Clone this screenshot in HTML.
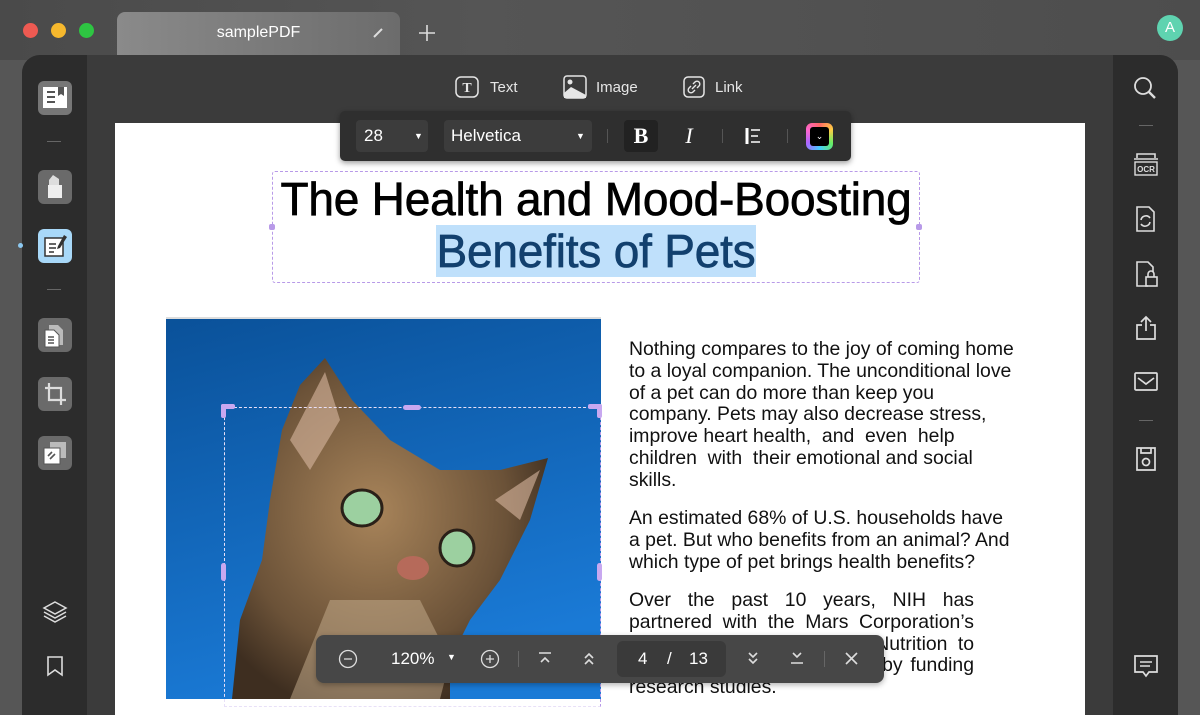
<!DOCTYPE html>
<html><head><meta charset="utf-8"><style>
*{margin:0;padding:0;box-sizing:border-box}
body{width:1200px;height:699px;overflow:hidden;background:#565656;font-family:"Liberation Sans",Arial,sans-serif;position:relative}
.abs{position:absolute}
.top{left:0;top:0;width:1200px;height:60px;background:linear-gradient(90deg,#4a4a4a,#555 40%,#4d4d4d);}
.tab{left:117px;top:12px;width:283px;height:48px;background:linear-gradient(90deg,#8a8a8a,#6c6c6c);border-radius:8px 8px 0 0;color:#fff;font-size:16px;text-align:center;line-height:42px}
.dot{width:15px;height:15px;border-radius:50%;top:23px}
.main{left:22px;top:55px;width:1156px;height:660px;background:#3b3b3b;border-radius:18px 18px 0 0;overflow:hidden}
.lsb{left:0;top:0;width:65px;height:100%;background:#2c2c2c}
.rsb{right:0;top:0;width:65px;height:100%;background:#2c2c2c}
.page{left:93px;top:68px;width:970px;height:600px;background:#fff}
.ib{width:34px;height:34px;border-radius:6px;background:#6a6a6a;left:16px}
.txt{font-size:19.4px;line-height:21.8px;color:#111;width:400px;white-space:nowrap}
.j div{text-align:justify;text-align-last:justify;white-space:normal}
.tb{color:#e6e6e6;font-size:15px}
svg{position:absolute}
</style></head><body>
<div class="abs top"></div>
<div class="abs dot" style="left:23px;background:#ee5a52"></div>
<div class="abs dot" style="left:51px;background:#f6b82d"></div>
<div class="abs dot" style="left:79px;background:#2ec542"></div>
<div class="abs tab">samplePDF</div>
<svg style="left:372px;top:27px" width="12" height="12"><path d="M2 10L10 2" stroke="#ddd" stroke-width="2"/></svg>
<svg style="left:418px;top:24px" width="18" height="18"><path d="M9 1V17M1 9H17" stroke="#ddd" stroke-width="1.6"/></svg>
<div class="abs" style="left:1157px;top:15px;width:26px;height:26px;border-radius:50%;background:#5fd3b0;color:#fff;text-align:center;line-height:26px;font-size:15px">A</div>

<div class="abs main">
 <div class="abs lsb"></div><div class="abs rsb"></div>
 <div class="abs page"></div>
</div>
<!-- left sidebar icons -->
<div class="abs ib" style="left:38px;top:81px;background:#777"></div>
<svg style="left:42px;top:86px" width="26" height="24"><rect x="1" y="1" width="24" height="21" fill="#fff"/><path d="M5 6h8M5 11h8M5 16h8" stroke="#555" stroke-width="2"/><path d="M16 1v9l3-2 3 2V1" fill="#555"/></svg>
<div class="abs" style="left:47px;top:141px;width:14px;height:1px;background:#666"></div>
<div class="abs ib" style="left:38px;top:170px"></div>
<svg style="left:44px;top:173px" width="22" height="28"><path d="M9 2l6 4v6H5V7z" fill="#ddd"/><rect x="4" y="12" width="14" height="13" fill="#eee"/></svg>
<div class="abs ib" style="left:38px;top:229px;background:#a8d8f8"></div>
<svg style="left:43px;top:233px" width="26" height="26"><rect x="2" y="5" width="18" height="18" fill="#fff" stroke="#333" stroke-width="1.5"/><path d="M6 11h7M6 15h7M6 19h5" stroke="#333" stroke-width="1.6"/><path d="M21 2l3 2-7 11-3 1 1-3z" fill="#333"/></svg>
<div class="abs" style="left:18px;top:243px;width:5px;height:5px;border-radius:50%;background:#8cc8f0"></div>
<div class="abs" style="left:47px;top:289px;width:14px;height:1px;background:#666"></div>
<div class="abs ib" style="left:38px;top:318px"></div>
<svg style="left:43px;top:323px" width="24" height="26"><path d="M6 2h9l5 5v15H6z" fill="#bbb"/><path d="M2 7h9l5 5v12H2z" fill="#fff" stroke="#555"/><path d="M5 14h6M5 17h6M5 20h6" stroke="#555" stroke-width="1.4"/></svg>
<div class="abs ib" style="left:38px;top:377px"></div>
<svg style="left:42px;top:381px" width="26" height="26"><path d="M7 2v17h17M3 7h16v17" fill="none" stroke="#ddd" stroke-width="2.2"/></svg>
<div class="abs ib" style="left:38px;top:436px"></div>
<svg style="left:42px;top:440px" width="26" height="26"><rect x="8" y="2" width="16" height="16" fill="#bbb"/><rect x="2" y="8" width="16" height="16" fill="#fff" stroke="#555"/><path d="M6 16l4-4M8 19l5-5" stroke="#555" stroke-width="1.6"/></svg>
<svg style="left:42px;top:600px" width="26" height="24"><path d="M13 2l11 6-11 6-11-6z M2 12l11 6 11-6 M2 16l11 6 11-6" fill="none" stroke="#ddd" stroke-width="1.5"/></svg>
<svg style="left:46px;top:655px" width="18" height="22"><path d="M2 2h14v18l-7-5-7 5z" fill="none" stroke="#ddd" stroke-width="1.6"/></svg>
<!-- right sidebar icons -->
<svg style="left:1133px;top:76px" width="26" height="24"><circle cx="10" cy="10" r="8" fill="none" stroke="#ddd" stroke-width="1.8"/><path d="M16 16l6 6" stroke="#ddd" stroke-width="2.4"/></svg>
<div class="abs" style="left:1139px;top:125px;width:14px;height:1px;background:#666"></div>
<svg style="left:1132px;top:152px" width="28" height="26"><path d="M5 6V2h18v4M2 7h24" stroke="#ddd" stroke-width="1.6" fill="none"/><rect x="3" y="10" width="22" height="13" fill="none" stroke="#ddd" stroke-width="1.4"/><text x="14" y="20" font-size="8" fill="#ddd" text-anchor="middle" font-family="Liberation Sans" font-weight="bold">OCR</text></svg>
<svg style="left:1134px;top:205px" width="24" height="28"><path d="M3 2h12l5 5v19H3z" fill="none" stroke="#ddd" stroke-width="1.6"/><path d="M7 15a5 5 0 0 1 9-2M16 17a5 5 0 0 1-9 2" fill="none" stroke="#ddd" stroke-width="1.6"/></svg>
<svg style="left:1134px;top:260px" width="26" height="28"><path d="M14 26H3V2h11l5 5v5" fill="none" stroke="#ddd" stroke-width="1.6"/><rect x="12" y="17" width="11" height="9" fill="none" stroke="#ddd" stroke-width="1.6"/><path d="M14 17v-3a3 3 0 0 1 6 0v3" fill="none" stroke="#ddd" stroke-width="1.6"/></svg>
<svg style="left:1134px;top:315px" width="24" height="26"><path d="M8 10H3v14h18V10h-5M12 16V2M7 7l5-5 5 5" fill="none" stroke="#ddd" stroke-width="1.7"/></svg>
<svg style="left:1133px;top:371px" width="26" height="22"><rect x="2" y="2" width="22" height="17" rx="1" fill="none" stroke="#ddd" stroke-width="1.7"/><path d="M5 7l8 6 8-6" fill="none" stroke="#ddd" stroke-width="1.7"/></svg>
<div class="abs" style="left:1139px;top:420px;width:14px;height:1px;background:#666"></div>
<svg style="left:1134px;top:446px" width="24" height="26"><path d="M3 2h18v22H3z" fill="none" stroke="#ddd" stroke-width="1.7"/><path d="M7 2v5h10V2" fill="none" stroke="#ddd" stroke-width="1.7"/><circle cx="12" cy="16" r="3.5" fill="none" stroke="#ddd" stroke-width="1.7"/></svg>
<svg style="left:1133px;top:654px" width="26" height="26"><path d="M2 2h22v16H16l-3 4-3-4H2z" fill="none" stroke="#ddd" stroke-width="1.7"/><path d="M7 8h12M7 12h10" stroke="#ddd" stroke-width="1.6"/></svg>

<!-- top toolbar -->
<svg style="left:455px;top:76px" width="24" height="22"><rect x="1" y="1" width="22" height="20" rx="5" fill="none" stroke="#e6e6e6" stroke-width="1.5"/><text x="12" y="16" font-size="14" fill="#e6e6e6" text-anchor="middle" font-family="Liberation Serif" font-weight="bold">T</text></svg>
<div class="abs tb" style="left:490px;top:79px">Text</div>
<svg style="left:563px;top:75px" width="24" height="24"><rect x="1" y="1" width="22" height="22" rx="3" fill="none" stroke="#e6e6e6" stroke-width="1.5"/><circle cx="7" cy="7" r="2.5" fill="#e6e6e6"/><path d="M1 18l7-6 15 8v3H1z" fill="#e6e6e6"/></svg>
<div class="abs tb" style="left:596px;top:79px">Image</div>
<svg style="left:683px;top:76px" width="22" height="22"><rect x="1" y="1" width="20" height="20" rx="4" fill="none" stroke="#e6e6e6" stroke-width="1.5"/><path d="M9 13l4-4M8 10l-2 2a2.5 2.5 0 0 0 4 4l2-2M14 12l2-2a2.5 2.5 0 0 0-4-4l-2 2" fill="none" stroke="#e6e6e6" stroke-width="1.4"/></svg>
<div class="abs tb" style="left:715px;top:79px">Link</div>

<!-- format bar -->
<div class="abs" style="left:340px;top:111px;width:511px;height:50px;background:#2f2f2f;border-radius:5px;box-shadow:0 2px 6px rgba(0,0,0,.4)"></div>
<div class="abs" style="left:356px;top:120px;width:72px;height:32px;background:#3c3c3c;border-radius:4px;color:#fff;font-size:17px;line-height:32px;padding-left:8px">28<span style="position:absolute;left:58px;font-size:9px">▼</span></div>
<div class="abs" style="left:444px;top:120px;width:148px;height:32px;background:#3c3c3c;border-radius:4px;color:#fff;font-size:17px;line-height:32px;padding-left:7px">Helvetica<span style="position:absolute;left:132px;font-size:9px">▼</span></div>
<div class="abs" style="left:607px;top:129px;width:1px;height:14px;background:#555"></div>
<div class="abs" style="left:624px;top:120px;width:34px;height:32px;background:#222;border-radius:4px;color:#fff;font:bold 22px 'Liberation Serif';text-align:center;line-height:32px">B</div>
<div class="abs" style="left:674px;top:120px;width:30px;height:32px;color:#fff;font:italic 22px 'Liberation Serif';text-align:center;line-height:32px">I</div>
<div class="abs" style="left:722px;top:129px;width:1px;height:14px;background:#555"></div>
<svg style="left:745px;top:127px" width="20" height="18"><path d="M2 1v16" stroke="#fff" stroke-width="3"/><path d="M6 3h9M6 9h7M6 15h9" stroke="#fff" stroke-width="1.5"/></svg>
<div class="abs" style="left:787px;top:129px;width:1px;height:14px;background:#555"></div>
<div class="abs" style="left:806px;top:123px;width:27px;height:27px;border-radius:6px;background:conic-gradient(#f66,#fc4,#6e6,#4cf,#a6f,#f6c,#f66)"></div>
<div class="abs" style="left:810px;top:127px;width:19px;height:19px;border-radius:3px;background:#000;color:#fff;font-size:9px;text-align:center;line-height:19px">⌄</div>

<!-- title -->
<div class="abs" style="left:272px;top:171px;width:648px;height:112px;border:1.5px dashed #b89ae8;border-radius:3px"></div>
<div class="abs" style="left:269px;top:224px;width:6px;height:6px;background:#b89ae8;border-radius:2px"></div>
<div class="abs" style="left:916px;top:224px;width:6px;height:6px;background:#b89ae8;border-radius:2px"></div>
<div class="abs" style="left:262px;top:173px;width:668px;text-align:center;font-size:46px;line-height:52px;color:#000;letter-spacing:-0.2px;-webkit-text-stroke:0.7px #000">The Health and Mood-Boosting<br><span style="background:#bfe0fb;color:#12406e;-webkit-text-stroke:0.7px #12406e;padding:0 1px">Benefits of Pets</span></div>

<!-- image -->
<svg style="left:166px;top:317px" width="435" height="382" viewBox="166 317 435 382">
<defs><linearGradient id="bg" x1="0" y1="0" x2="0.3" y2="1"><stop offset="0" stop-color="#0a5199"/><stop offset="1" stop-color="#1a7ad6"/></linearGradient>
<radialGradient id="fur" cx="0.45" cy="0.45" r="0.6"><stop offset="0" stop-color="#a8845a"/><stop offset="0.7" stop-color="#6b5238"/><stop offset="1" stop-color="#3e2e20"/></radialGradient></defs>
<rect x="166" y="317" width="435" height="382" fill="url(#bg)"/>
<rect x="166" y="317" width="435" height="2" fill="#ddd"/>
<path d="M325 358 L352 400 L390 440 L440 470 L500 470 L548 458 L530 520 L500 580 L470 620 L450 660 L450 699 L232 699 L240 620 L262 560 L270 500 L282 430 L300 385 Z" fill="url(#fur)"/>
<path d="M325 372 L340 420 L310 470 L290 440 Z" fill="#d9b8a0" opacity=".6"/>
<path d="M540 470 L520 520 L495 500 Z" fill="#d9b8a0" opacity=".6"/>
<path d="M330 600 L420 600 L450 660 L440 699 L290 699 Z" fill="#c8b090" opacity=".5"/>
<ellipse cx="362" cy="508" rx="20" ry="18" fill="#9cd0a0" stroke="#2a2018" stroke-width="3"/>
<ellipse cx="457" cy="548" rx="17" ry="18" fill="#9cd0a0" stroke="#2a2018" stroke-width="3"/>
<ellipse cx="413" cy="568" rx="16" ry="12" fill="#b66a5a"/>
</svg>
<div class="abs" style="left:224px;top:407px;width:377px;height:300px;border:1.5px dashed #e8e0f8;border-right-color:#b89ae8"></div>
<div class="abs" style="left:221px;top:404px;width:14px;height:5px;background:#c8a8f0;border-radius:2px"></div>
<div class="abs" style="left:221px;top:404px;width:5px;height:14px;background:#c8a8f0;border-radius:2px"></div>
<div class="abs" style="left:588px;top:404px;width:14px;height:5px;background:#c8a8f0;border-radius:2px"></div>
<div class="abs" style="left:597px;top:404px;width:5px;height:14px;background:#c8a8f0;border-radius:2px"></div>
<div class="abs" style="left:403px;top:405px;width:18px;height:5px;background:#c8a8f0;border-radius:3px"></div>
<div class="abs" style="left:221px;top:563px;width:5px;height:18px;background:#c8a8f0;border-radius:3px"></div>
<div class="abs" style="left:597px;top:563px;width:5px;height:18px;background:#c8a8f0;border-radius:3px"></div>

<!-- body text -->
<div class="abs txt" style="left:629px;top:339px">Nothing compares to the joy of coming home<br>to a loyal companion. The unconditional love<br>of a pet can do more than keep you<br>company. Pets may also decrease stress,<br>improve heart health,&nbsp; and&nbsp; even&nbsp; help<br>children&nbsp; with&nbsp; their emotional and social<br>skills.</div>
<div class="abs txt" style="left:629px;top:508px">An estimated 68% of U.S. households have<br>a pet. But who benefits from an animal? And<br>which type of pet brings health benefits?</div>
<div class="abs txt j" style="left:629px;top:590px;width:345px"><div>Over the past 10 years, NIH has</div><div>partnered with the Mars Corporation’s</div><div>WALTHAM Centre for Pet Nutrition to</div><div>answer questions like these by funding</div><div style="text-align-last:left">research studies.</div></div>

<!-- bottom toolbar -->
<div class="abs" style="left:316px;top:635px;width:568px;height:48px;background:#474747;border-radius:8px;box-shadow:0 2px 6px rgba(0,0,0,.3)"></div>
<svg style="left:338px;top:649px" width="20" height="20"><circle cx="10" cy="10" r="8.5" fill="none" stroke="#ddd" stroke-width="1.3"/><path d="M6 10h8" stroke="#ddd" stroke-width="1.3"/></svg>
<div class="abs" style="left:391px;top:649px;color:#fff;font-size:17px">120%</div>
<div class="abs" style="left:447px;top:652px;color:#fff;font-size:9px">▼</div>
<svg style="left:480px;top:649px" width="20" height="20"><circle cx="10" cy="10" r="8.5" fill="none" stroke="#ddd" stroke-width="1.3"/><path d="M6 10h8M10 6v8" stroke="#ddd" stroke-width="1.3"/></svg>
<div class="abs" style="left:518px;top:651px;width:1px;height:16px;background:#666"></div>
<svg style="left:538px;top:651px" width="14" height="14"><path d="M1 2h12M3 11l4-4 4 4" fill="none" stroke="#ddd" stroke-width="1.6"/></svg>
<svg style="left:582px;top:650px" width="14" height="16"><path d="M3 8l4-4 4 4M3 14l4-4 4 4" fill="none" stroke="#ddd" stroke-width="1.6"/></svg>
<div class="abs" style="left:617px;top:641px;width:109px;height:36px;background:#3a3a3a;border-radius:6px;color:#fff;font-size:17px;line-height:36px"><span style="position:absolute;left:21px">4</span><span style="position:absolute;left:50px">/</span><span style="position:absolute;left:72px">13</span></div>
<svg style="left:746px;top:651px" width="14" height="16"><path d="M3 2l4 4 4-4M3 8l4 4 4-4" fill="none" stroke="#ddd" stroke-width="1.6"/></svg>
<svg style="left:790px;top:651px" width="14" height="14"><path d="M3 2l4 4 4-4M1 12h12" fill="none" stroke="#ddd" stroke-width="1.6"/></svg>
<div class="abs" style="left:824px;top:651px;width:1px;height:16px;background:#666"></div>
<svg style="left:845px;top:652px" width="13" height="13"><path d="M1 1l11 11M12 1L1 12" stroke="#ddd" stroke-width="1.6"/></svg>
</body></html>
